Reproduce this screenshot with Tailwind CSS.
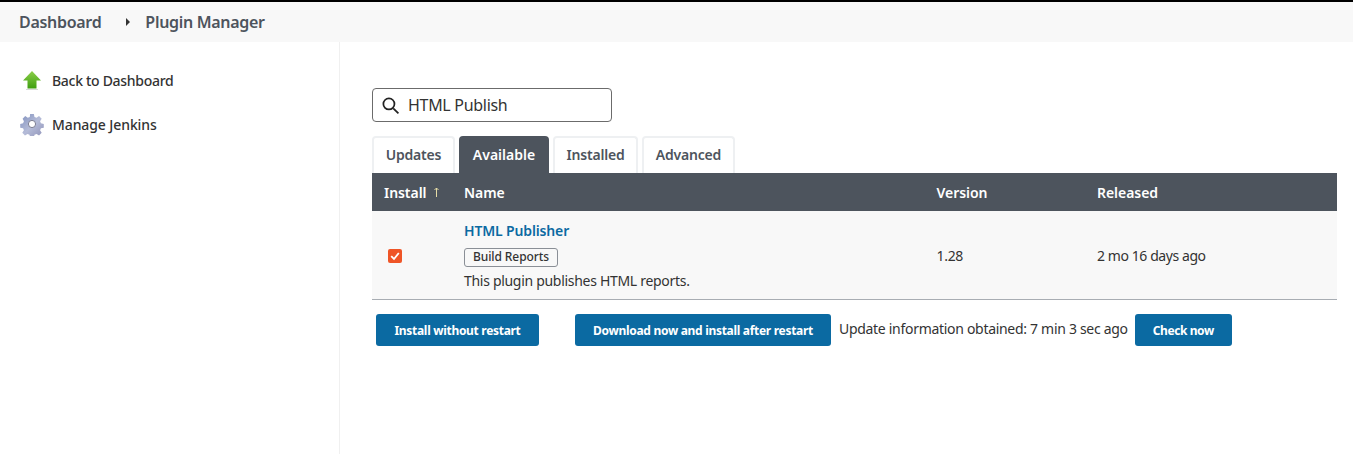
<!DOCTYPE html>
<html lang="en">
<head>
  <meta charset="UTF-8">
  <title>Plugin Manager</title>
  <script src="https://cdn.jsdelivr.net/npm/@tailwindcss/browser@4"></script>
</head>
<body class="h-[454px] overflow-hidden bg-white font-['Noto_Sans',sans-serif] text-[14px] tracking-[-0.3px] text-[#333]">
  <!-- breadcrumb -->
  <div class="flex h-[42px] items-center border-t-2 border-black bg-[#f8f8f8] pl-[19px] font-semibold text-[#4d545d]">
    <span class="text-[16px]">Dashboard</span>
    <span class="ml-[25px] mr-[15px] h-0 w-0 border-y-[4px] border-l-[4px] border-y-transparent border-l-[#333]"></span>
    <span class="text-[16px]">Plugin Manager</span>
  </div>

  <div class="flex h-[412px]">
    <!-- side panel -->
    <div class="w-[340px] shrink-0 border-r border-[#f0f0f0] pl-[20px] pt-[26px] font-medium">
      <div class="flex h-[24px] items-center gap-[8px]">
        <svg class="h-[24px] w-[24px]" viewBox="0 0 24 24">
          <defs>
            <linearGradient id="arrowFill" x1="0" y1="0" x2="0" y2="1">
              <stop offset="0" stop-color="#8ccf4a"/>
              <stop offset="1" stop-color="#3f9e10"/>
            </linearGradient>
          </defs>
          <path d="M12 3 L21 12.5 H16.5 V20.5 H7.5 V12.5 H3 Z" fill="url(#arrowFill)"/>
          <path d="M6 21 H18 V22 H6 Z" fill="#d8d8d8"/>
        </svg>
        <span>Back to Dashboard</span>
      </div>
      <div class="mt-[20px] flex h-[24px] items-center gap-[8px]">
        <svg class="h-[24px] w-[24px]" viewBox="0 0 24 24">
          <defs>
            <linearGradient id="gearFill" x1="0" y1="0" x2="1" y2="1">
              <stop offset="0" stop-color="#7f8fbd"/>
              <stop offset="0.5" stop-color="#b5bcd8"/>
              <stop offset="1" stop-color="#8f92b8"/>
            </linearGradient>
          </defs>
          <path fill-rule="evenodd" d="M10 1.5h4l.6 3 2.2.9 2.6-1.7 2.8 2.8-1.7 2.6.9 2.2 3 .6v4l-3 .6-.9 2.2 1.7 2.6-2.8 2.8-2.6-1.7-2.2.9-.6 3h-4l-.6-3-2.2-.9-2.6 1.7-2.8-2.8 1.7-2.6-.9-2.2-3-.6v-4l3-.6.9-2.2L2.1 6.5l2.8-2.8 2.6 1.7 2.2-.9z" transform="translate(.6 .6) scale(.95)" fill="url(#gearFill)"/>
          <circle cx="12" cy="12" r="3.6" fill="#fff" stroke="#7d7f93" stroke-width="1"/>
        </svg>
        <span class="tracking-[-0.1px]">Manage Jenkins</span>
      </div>
    </div>

    <!-- main -->
    <div class="min-w-0 flex-1 pl-[32px] pr-[16px] pt-[46px]">
      <div class="flex h-[34px] w-[240px] items-center rounded-[4px] border border-[#6b6b6b] pl-[8px] text-[16px]">
        <svg class="h-[19px] w-[19px] shrink-0" viewBox="0 0 24 24" fill="none" stroke="#222" stroke-width="2.2">
          <circle cx="10" cy="10" r="7"/>
          <path d="M15.5 15.5 L22 22"/>
        </svg>
        <span class="ml-[8px]">HTML Publish</span>
      </div>

      <!-- tabs -->
      <div class="mt-[14px] flex h-[37px] items-end gap-[4px] font-semibold text-[#4d545d]">
        <div class="flex h-[37px] w-[83px] items-center justify-center rounded-t-[4px] border-2 border-b-0 border-[#eef0f2] pb-[2px] tracking-[-0.2px]">Updates</div>
        <div class="flex h-[37px] w-[90px] items-center justify-center rounded-t-[4px] bg-[#4d545d] pb-[1px] tracking-normal text-white">Available</div>
        <div class="flex h-[37px] w-[85px] items-center justify-center rounded-t-[4px] border-2 border-b-0 border-[#eef0f2] pb-[2px] tracking-[-0.2px]">Installed</div>
        <div class="flex h-[37px] w-[93px] items-center justify-center rounded-t-[4px] border-2 border-b-0 border-[#eef0f2] pb-[2px] tracking-[-0.2px]">Advanced</div>
      </div>

      <!-- plugin table -->
      <div class="flex h-[38px] items-center bg-[#4d545d] font-semibold tracking-[-0.05px] text-white">
        <div class="flex w-[92px] items-center pl-[12px]">
          <span>Install</span>
          <svg class="ml-[8px] h-[10px] w-[5px]" viewBox="0 0 5 10" fill="none" stroke="#e6dca6" stroke-width="1"><path d="M2.5 10 V1 M0.5 3 L2.5 1 L4.5 3"/></svg>
        </div>
        <div class="w-[472.5px]">Name</div>
        <div class="w-[160.5px]">Version</div>
        <div>Released</div>
      </div>
      <div class="flex h-[89px] items-center border-b border-[#a8adb3] bg-[#f8f8f8]">
        <div class="w-[92px] pl-[16px]">
          <div class="mt-[1px] flex h-[14px] w-[14px] items-center justify-center rounded-[2px] bg-[#ef5527]">
            <svg class="h-[12px] w-[12px]" viewBox="0 0 12 12" fill="none" stroke="#fff" stroke-width="1.8"><path d="M2.2 6.2 L5 9 L9.8 3"/></svg>
          </div>
        </div>
        <div class="w-[472.5px]">
          <div class="font-semibold leading-[19px] tracking-[-0.15px] text-[#0b6aa2]">HTML Publisher</div>
          <div class="mt-[8px] flex h-[19px] w-[94px] items-center justify-center rounded-[3px] border border-[#8a8f96] text-[12px] font-medium tracking-[-0.1px]">Build Reports</div>
          <div class="mt-[4px] leading-[19px]">This plugin publishes HTML reports.</div>
        </div>
        <div class="w-[160.5px]">1.28</div>
        <div class="tracking-[-0.42px]">2 mo 16 days ago</div>
      </div>

      <!-- buttons -->
      <div class="mt-[14px] flex items-center">
        <div class="ml-[4px] flex h-[32px] w-[163px] items-center justify-center rounded-[3px] bg-[#0b6aa2] pt-[1px] text-[12px] font-bold text-white">Install without restart</div>
        <div class="ml-[36px] flex h-[32px] w-[256px] items-center justify-center rounded-[3px] bg-[#0b6aa2] pt-[1px] text-[12px] font-bold text-white">Download now and install after restart</div>
        <span class="ml-[8px] -mt-[4px]">Update information obtained: 7 min 3 sec ago</span>
        <div class="ml-[7px] flex h-[32px] w-[97px] items-center justify-center rounded-[3px] bg-[#0b6aa2] pt-[1px] text-[12px] font-bold tracking-[-0.4px] text-white">Check now</div>
      </div>
    </div>
  </div>
</body>
</html>
